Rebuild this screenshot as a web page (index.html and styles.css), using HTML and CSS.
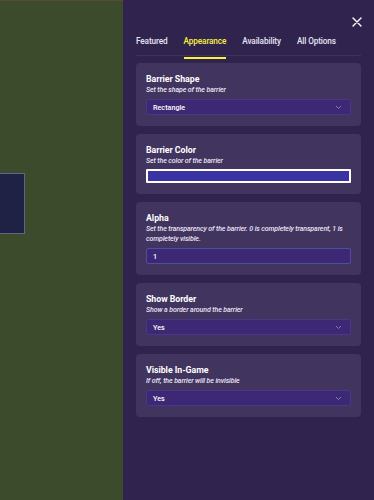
FILE: index.html
```html
<!DOCTYPE html>
<html lang="en">
<head>
    <meta charset="UTF-8">
    <meta name="viewport" content="width=device-width, initial-scale=1.0">
    <title>Barrier Options</title>
    <link rel="stylesheet" href="styles.css">
</head>
<body>
    <div class="screen">
        <div class="game-area">
            <div class="barrier-block"></div>
        </div>

        <div class="panel">
            <div class="panel-top">
                <button class="close-btn" type="button" aria-label="Close">
                    <svg width="10" height="10" viewBox="0 0 10 10">
                        <path d="M1 1 L9 9 M9 1 L1 9" stroke="#ffffff" stroke-width="1.4" stroke-linecap="round"/>
                    </svg>
                </button>
            </div>

            <div class="tabs">
                <div class="tab">Featured</div>
                <div class="tab active">Appearance</div>
                <div class="tab">Availability</div>
                <div class="tab">All Options</div>
            </div>

            <div class="cards">
                <div class="card">
                    <div class="card-title">Barrier Shape</div>
                    <div class="card-desc">Set the shape of the barrier</div>
                    <div class="select">
                        <span>Rectangle</span>
                        <svg class="chevron" width="7" height="5" viewBox="0 0 7 5">
                            <path d="M1 1 L3.5 3.5 L6 1" fill="none" stroke="#8f84b8" stroke-width="0.9"/>
                        </svg>
                    </div>
                </div>

                <div class="card">
                    <div class="card-title">Barrier Color</div>
                    <div class="card-desc">Set the color of the barrier</div>
                    <div class="color-field">
                        <div class="color-swatch"></div>
                    </div>
                </div>

                <div class="card">
                    <div class="card-title">Alpha</div>
                    <div class="card-desc">Set the transparency of the barrier. 0 is completely transparent, 1 is completely visible.</div>
                    <div class="text-input">1</div>
                </div>

                <div class="card">
                    <div class="card-title">Show Border</div>
                    <div class="card-desc">Show a border around the barrier</div>
                    <div class="select">
                        <span>Yes</span>
                        <svg class="chevron" width="7" height="5" viewBox="0 0 7 5">
                            <path d="M1 1 L3.5 3.5 L6 1" fill="none" stroke="#8f84b8" stroke-width="0.9"/>
                        </svg>
                    </div>
                </div>

                <div class="card">
                    <div class="card-title">Visible In-Game</div>
                    <div class="card-desc">If off, the barrier will be invisible</div>
                    <div class="select">
                        <span>Yes</span>
                        <svg class="chevron" width="7" height="5" viewBox="0 0 7 5">
                            <path d="M1 1 L3.5 3.5 L6 1" fill="none" stroke="#8f84b8" stroke-width="0.9"/>
                        </svg>
                    </div>
                </div>
            </div>
        </div>
    </div>
</body>
</html>
```

FILE: styles.css
```css
* {
    box-sizing: border-box;
}

html, body {
    margin: 0;
    padding: 0;
    height: 100%;
}

body {
    font-family: 'Roboto', 'Liberation Sans', sans-serif;
    color: #ffffff;
    background: #30244f;
    overflow: hidden;
}

.screen {
    display: flex;
    width: 374px;
    height: 500px;
}

.game-area {
    width: 123px;
    flex-shrink: 0;
    background: #3b4b2c;
    border-top: 1px solid #584a36;
    padding-top: 172px;
}

.barrier-block {
    width: 25px;
    height: 61px;
    background: #1f2245;
    border: 1px solid #5f6582;
    border-left: none;
}

.panel {
    flex: 1;
    background: #30244f;
    padding: 0 13px;
}

.panel-top {
    display: flex;
    justify-content: flex-end;
    padding-top: 15px;
    height: 31px;
}

.close-btn {
    background: none;
    border: none;
    padding: 0;
    width: 10px;
    height: 10px;
    margin-right: -1px;
    cursor: pointer;
}

.tabs {
    display: flex;
    gap: 16px;
    border-bottom: 1px solid rgba(255, 255, 255, 0.07);
    height: 25px;
    padding-top: 4px;
}

.tab {
    font-size: 8.2px;
    font-weight: 500;
    letter-spacing: -0.1px;
    color: #e8e4f4;
    height: 24px;
    line-height: 12px;
    border-bottom: 2px solid transparent;
}

.tab.active {
    color: #f7f23d;
    border-bottom-color: #f7f23d;
}

.cards {
    display: flex;
    flex-direction: column;
    gap: 8px;
    margin-top: 7px;
}

.card {
    background: #41345f;
    border-radius: 4px;
    padding: 10px 10px 11px;
}

.card-title {
    font-size: 8.8px;
    font-weight: 700;
    letter-spacing: -0.05px;
    line-height: 12px;
    color: #ffffff;
}

.card-desc {
    font-size: 7px;
    font-style: italic;
    font-weight: 500;
    letter-spacing: -0.1px;
    line-height: 10px;
    color: #ebe7f5;
}

.select,
.text-input {
    display: flex;
    align-items: center;
    justify-content: space-between;
    height: 16px;
    margin-top: 4px;
    padding: 0 8px 0 6px;
    background: #3d2875;
    border: 1px solid #4a3886;
    border-radius: 2px;
    font-size: 7.2px;
    font-weight: 500;
    color: #ffffff;
}

.text-input {
    border-color: #4f4f9e;
    margin-top: 4px;
}

.chevron {
    display: block;
}

.color-field {
    margin-top: 3px;
    height: 14px;
    background: #ffffff;
    padding: 2px;
    border-radius: 1px;
}

.color-swatch {
    height: 100%;
    background: #3a33a3;
}
```
